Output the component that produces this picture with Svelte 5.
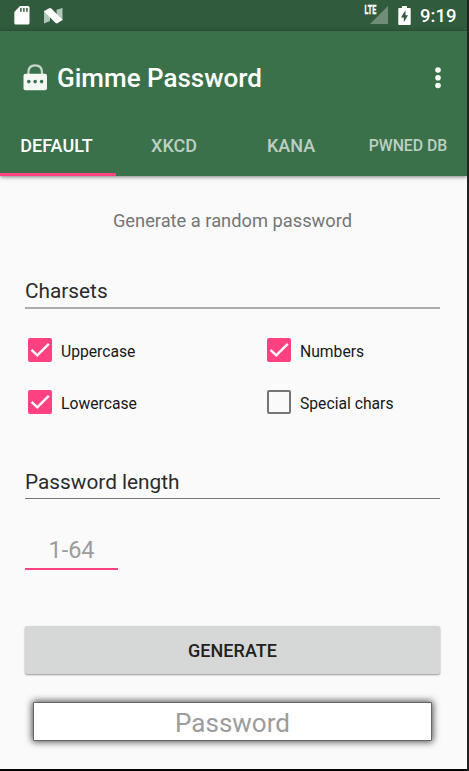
<script>
  const tabs = ['Default', 'XKCD', 'Kana', 'Pwned DB'];
  let active = $state(0);
  let charsets = $state([
    { label: 'Uppercase', checked: true },
    { label: 'Numbers', checked: true },
    { label: 'Lowercase', checked: true },
    { label: 'Special chars', checked: false }
  ]);
</script>

<div class="device">
  <div class="screen">
    <div class="status">
      <svg class="sd" width="16" height="19" viewBox="0 0 16 19"><path fill="#fff" d="M6 0H14Q15.5 0 15.5 1.5V17Q15.5 18.5 14 18.5H1.8Q.3 18.5 .3 17V6Z" /><path stroke="#305b3d" stroke-width="1.5" d="M6.9 2v3.7M9.9 2v3.7M12.9 2v3.7" /></svg>
      <svg class="nougat" width="19" height="16" viewBox="0 0 19 16"><path fill="#b3c5b8" d="M0 2.5L6 5V13L0 15.5ZM18.5 0V13L12.6 10V1.8Z" /><path fill="#fff" d="M0 3.3L4.8 .4Q6.4 -.4 7.8 1L18.5 11.8L14 15Q12.5 16 11 14.6Z" /></svg>
      <span class="spacer"></span>
      <svg class="signal" width="25" height="20" viewBox="0 0 25 20"><path fill="#6f8d78" d="M24 1V19H6Z" /><text x="0.6" y="9.4" textLength="11.6" lengthAdjust="spacingAndGlyphs">LTE</text></svg>
      <svg class="battery" width="13" height="19" viewBox="0 0 13 19"><path fill="#fff" d="M4 0H9V2H12Q12.7 2 12.7 3V18Q12.7 19 12 19H1Q.3 19 .3 18V3Q.3 2 1 2H4Z" /><path fill="#305b3d" d="M7.5 4.3L3 11.4H5.8V16.2L10 9.2H7.5Z" /></svg>
      <span class="time">9:19</span>
    </div>
    <header>
      <div class="toolbar">
        <svg class="lock" width="25" height="27" viewBox="0 0 25 27"><path fill="none" stroke="#c6d6ca" stroke-width="2.2" d="M5.4 10V8.5Q5.4 1.4 12.2 1.4T19 8.5V10" /><rect x=".5" y="9.8" width="23.5" height="16.4" rx="2" fill="#f4f8f5" /><g fill="#3a714b"><circle cx="5.8" cy="17.6" r="1.8" /><circle cx="12.2" cy="17.6" r="1.8" /><circle cx="18.6" cy="17.6" r="1.8" /></g></svg>
        <h1>Gimme Password</h1>
        <svg class="more" width="8" height="24" viewBox="0 0 8 24"><g fill="#fff"><circle cx="4" cy="4" r="2.8" /><circle cx="4" cy="11.7" r="2.8" /><circle cx="4" cy="19.5" r="2.8" /></g></svg>
      </div>
      <nav>
        {#each tabs as tab, i}
          <button class="tab" class:active={active === i} class:small={i === 3} onclick={() => (active = i)}><span>{tab}</span></button>
        {/each}
      </nav>
    </header>
    <main>
      <p class="intro">Generate a random password</p>
      <h2 class="charsets">Charsets</h2>
      <div class="checks">
        {#each charsets as item}
          <label>
            <input type="checkbox" bind:checked={item.checked} />
            <span class="box">
              {#if item.checked}<svg width="24" height="24" viewBox="0 0 24 24"><path fill="none" stroke="#fff" stroke-width="2.4" d="M3.5 11.8L9.3 17.4L20.8 5.8" /></svg>{/if}
            </span>
            <span class="name">{item.label}</span>
          </label>
        {/each}
      </div>
      <h2 class="length">Password length</h2>
      <input class="count" placeholder="1-64" />
      <button class="generate">GENERATE</button>
      <input class="result" placeholder="Password" readonly />
    </main>
  </div>
</div>

<style>
  :global(body) { margin: 0; }
  * { box-sizing: border-box; }
  .device { width: 469px; height: 771px; background: #000; overflow: hidden; border-right: 2px solid #222; font-family: Roboto, sans-serif; }
  .screen { height: 769px; background: #fafafa; display: flex; flex-direction: column; }
  svg { display: block; flex: none; }
  .status { height: 31px; flex: none; background: #305b3d; display: flex; align-items: flex-start; padding: 6px 11px 0 14px; color: #fff; }
  .nougat { margin: 2px 0 0 14px; overflow: visible; }
  .spacer { flex: 1; }
  .signal { margin-top: -1px; overflow: visible; }
  .signal text { font: 700 12px Roboto, sans-serif; fill: #fff; stroke: #fff; stroke-width: .35px; }
  .battery { margin-left: 9px; }
  .time { font-size: 18.5px; line-height: 20px; font-weight: 500; margin-left: 9px; width: 36px; white-space: nowrap; }
  header { height: 145px; flex: none; background: #3a714b; box-shadow: 0 1px 4px rgba(0,0,0,.5); display: flex; flex-direction: column; }
  .toolbar { height: 85px; display: flex; align-items: center; padding: 9px 25px 0 23px; }
  h1 { margin: 0 0 0 9px; flex: 1; font-size: 26px; font-weight: 500; line-height: 30px; color: #fff; }
  .lock { margin-top: -1px; }
  nav { height: 60px; display: flex; }
  .tab { flex: 1; border: 0; padding: 2px 1px 0 0; background: none; font: 500 18px Roboto, sans-serif; color: #bdcfc3; text-transform: uppercase; border-bottom: 3px solid transparent; white-space: nowrap; }
  .tab.active { color: #fff; border-color: #ff4081; flex: 0 0 116px; padding-right: 3px; letter-spacing: .05px; }
  .tab.small { font-size: 15.8px; }
  main { flex: 1; padding: 33px 27px 0 25px; display: flex; flex-direction: column; }
  .intro { margin: 0; height: 24px; line-height: 24px; font-size: 18.3px; color: #757575; text-align: center; }
  h2 { margin: 0; height: 33px; line-height: 32px; font-size: 20.8px; font-weight: 400; color: #2b2b2b; flex: none; white-space: nowrap; }
  .charsets { margin-top: 43px; line-height: 31px; border-bottom: 2px solid #ababab; }
  .checks { display: grid; grid-template-columns: 239px 1fr; grid-auto-rows: 52px; margin-top: 15px; }
  label { display: flex; align-items: center; padding-left: 3px; color: #171717; font-size: 15.7px; }
  label input { display: none; }
  .box { width: 24px; height: 24px; border-radius: 2px; border: 2px solid #757575; flex: none; }
  .box:has(svg) { background: #ff4081; border: 0; }
  .name { margin-left: 9px; padding-top: 2px; white-space: nowrap; }
  .length { margin-top: 38px; border-bottom: 1px solid #777; }
  .count { margin-top: 29px; width: 93px; height: 42px; flex: none; border: 0; border-bottom: 2px solid #ff4081; background: none; outline: 0; padding: 3px 0 0; text-align: center; font: 23.5px Roboto, sans-serif; }
  input::placeholder { color: #9c9c9c; opacity: 1; }
  .generate { margin-top: 56px; height: 48px; flex: none; border: 0; padding: 0; border-radius: 2px; background: #d6d8d7; box-shadow: 0 1px 2px rgba(0,0,0,.4); font: 500 18px Roboto, sans-serif; letter-spacing: .05px; color: #202120; }
  .result { margin: 28px 8px 0; height: 39px; flex: none; border: 1px solid #666; border-radius: 1px; background: #fff; box-shadow: 0 0 7px 1px rgba(0,0,0,.7); outline: 0; padding: 3px 0 0; text-align: center; font: 26px Roboto, sans-serif; }
</style>
